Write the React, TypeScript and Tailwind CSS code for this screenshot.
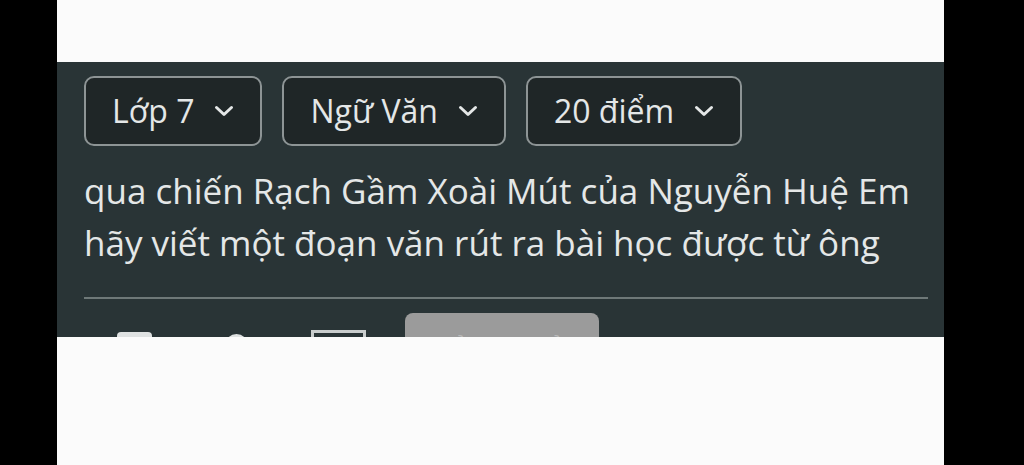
const filters = ['Lớp 7', 'Ngữ Văn', '20 điểm'];

function Chevron() {
  return (
    <svg width="22" height="14" viewBox="0 0 22 14" fill="none">
      <polyline
        points="3.5,3.5 11,10.5 18.5,3.5"
        stroke="currentColor"
        strokeWidth="3"
        strokeLinecap="round"
        strokeLinejoin="round"
      />
    </svg>
  );
}

function FilterButton({ label }: { label: string }) {
  return (
    <button className="h-[70px] flex items-center gap-[19px] pl-[26px] pr-[25px] rounded-[10px] border-2 border-[#8d9495] bg-[#1f2627] text-[#e4e7e7] text-[32px]">
      <span>{label}</span>
      <Chevron />
    </button>
  );
}

export default function App() {
  return (
    <div className="w-[1024px] h-[465px] bg-black flex font-['Open_Sans',sans-serif]">
      <div className="ml-[57px] w-[887px] h-full flex flex-col bg-[#fbfbfb]">
        {/* top strip */}
        <div className="h-[62px] shrink-0" />

        {/* question card, cut off by the sheet below */}
        <div className="h-[275px] shrink-0 overflow-hidden bg-[#293436] pl-[27px] pr-[16px] pt-[14px]">
          <div className="flex gap-[20px]">
            {filters.map((f) => (
              <FilterButton key={f} label={f} />
            ))}
          </div>

          <p className="mt-[19px] text-[35px] leading-[52px] text-[#e4e7e7] whitespace-nowrap">
            qua chiến Rạch Gầm Xoài Mút của Nguyễn Huệ Em
            <br />
            hãy viết một đoạn văn rút ra bài học được từ ông
          </p>

          <div className="mt-[28px] h-[2px] bg-[#6e7878]" />

          {/* toolbar */}
          <div className="mt-[14px] flex items-start">
            <div className="ml-[33px] mt-[19px] w-[35px] h-[30px] rounded-t-[4px] bg-[#dfe2e2]" />
            <div className="ml-[73px] mt-[21px] w-[23px] h-[23px] rounded-full border-[3px] border-[#dfe2e2]" />
            <div className="ml-[63px] mt-[17px] w-[55px] h-[30px] border-[3px] border-[#c9cdcd]" />
            <button className="ml-[39px] w-[194px] h-[60px] pt-[17px] flex justify-center items-start rounded-[8px] bg-[#9b9b9b] text-[#b9b9b9] text-[26px] leading-[32px]">
              Gửi câu hỏi
            </button>
          </div>
        </div>

        <div className="flex-1" />
      </div>
    </div>
  );
}
